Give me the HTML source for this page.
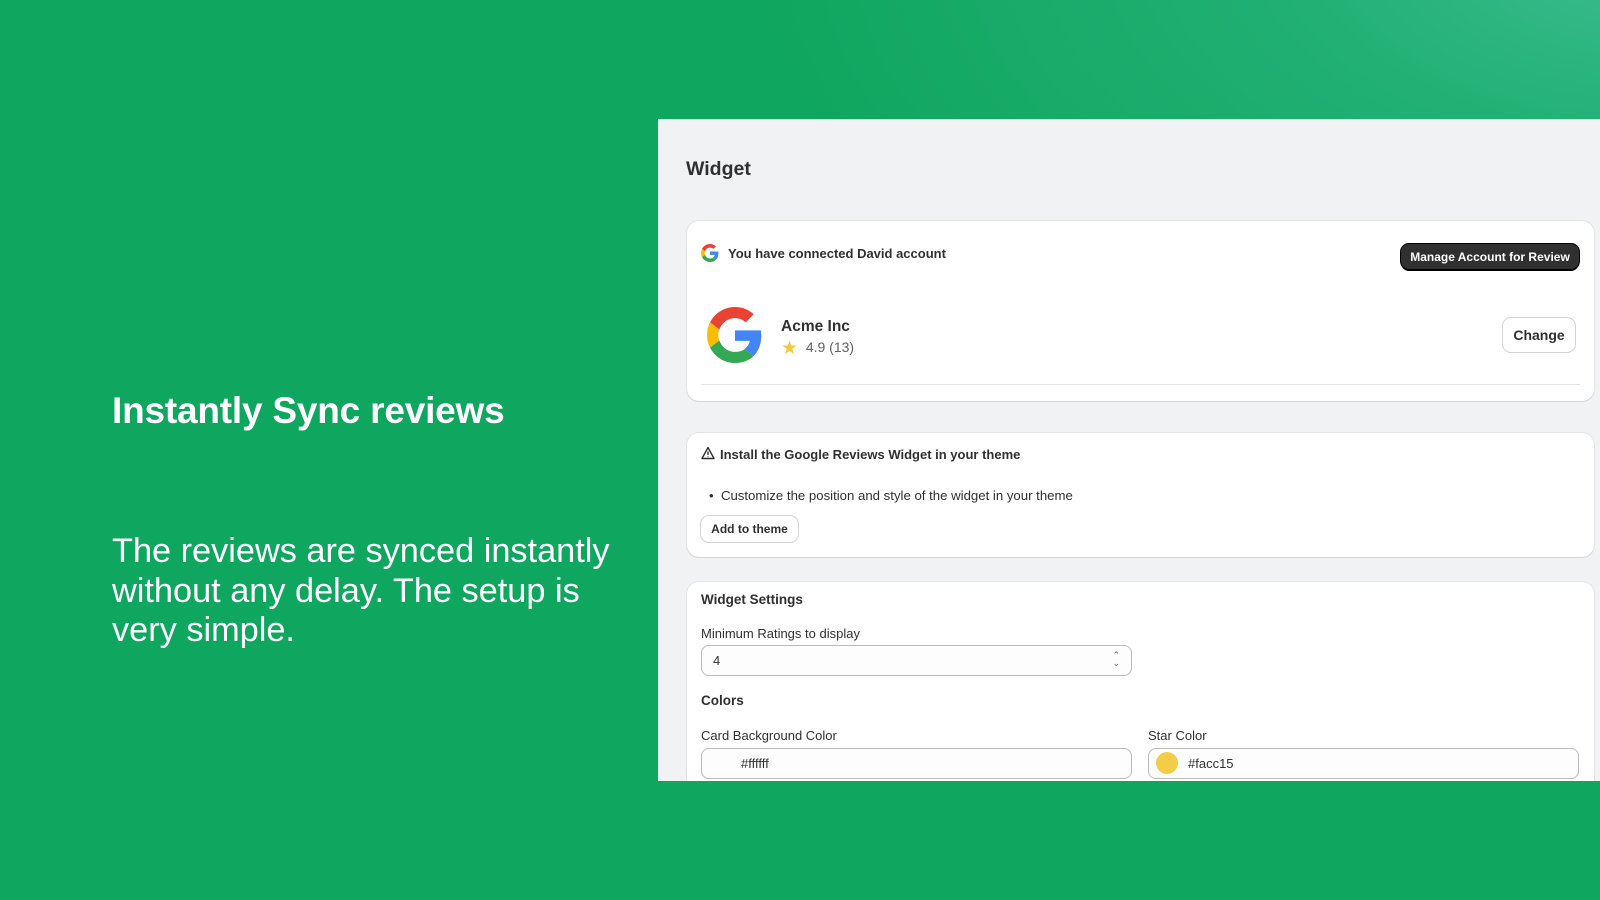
<!DOCTYPE html>
<html><head><meta charset="utf-8"><style>
*{box-sizing:border-box;margin:0;padding:0}
body{width:1600px;height:900px;overflow:hidden;font-family:"Liberation Sans",sans-serif;background:#0fa65f;position:relative}
.bg{position:absolute;inset:0;background:radial-gradient(ellipse 900px 500px at 1650px -60px,#3dbd92 0%,#22b074 40%,rgba(15,166,95,0) 100%)}
.h1{position:absolute;left:112px;top:390px;color:#fff;font-size:37px;font-weight:bold;letter-spacing:-0.2px}
.p{position:absolute;left:112px;top:532px;color:#fff;font-size:34.3px;line-height:39.5px;width:525px}
.panel{position:absolute;left:658px;top:119px;width:942px;height:662px;background:#f1f2f4;overflow:hidden;color:#303030}
.card{position:absolute;left:29px;width:907px;background:#fff;border-radius:12px;box-shadow:0 1px 0 #d4d4d4,0 0 0 1px #e3e3e3}
.b{font-weight:bold}
.abs{position:absolute}
.btn{position:absolute;border-radius:8px;background:#fff;box-shadow:0 0 0 1px #d4d4d4,0 1px 0 #c8c8c8;font-size:13px;font-weight:bold;display:flex;align-items:center;justify-content:center}
.inp{position:absolute;height:31px;border-radius:8px;background:#fdfdfd;box-shadow:inset 0 0 0 1px #bbb;font-size:13px;display:flex;align-items:center}
</style></head><body>
<div class="bg"></div>
<div class="h1">Instantly Sync reviews</div>
<div class="p">The reviews are synced instantly without any delay. The setup is very simple.</div>
<div class="panel">
 <div class="abs b" style="left:28px;top:39px;font-size:19.5px">Widget</div>
 <div class="card" style="top:102px;height:180px">
  <svg class="abs" style="left:14px;top:23px" width="18" height="18" viewBox="0 0 48 48"><path fill="#EA4335" d="M24 9.5c3.5 0 6.7 1.2 9.2 3.6l6.9-6.9C35.9 2.4 30.5 0 24 0 14.6 0 6.6 5.4 2.6 13.2l8 6.2C12.5 13.7 17.8 9.5 24 9.5z"/><path fill="#4285F4" d="M46.5 24.5c0-1.6-.1-3.1-.4-4.5H24v9h12.7c-.6 2.9-2.2 5.4-4.7 7.1l7.7 6c4.5-4.2 6.8-10.3 6.8-17.6z"/><path fill="#FBBC05" d="M10.5 28.6c-.5-1.4-.8-3-.8-4.6s.3-3.2.8-4.6l-8-6.2C.9 16.5 0 20.1 0 24s.9 7.5 2.6 10.8l7.9-6.2z"/><path fill="#34A853" d="M24 48c6.5 0 11.9-2.1 15.9-5.8l-7.7-6c-2.2 1.5-5 2.3-8.2 2.3-6.2 0-11.5-4.2-13.4-9.9l-8 6.2C6.6 42.6 14.6 48 24 48z"/></svg>
  <div class="abs b" style="left:41px;top:25px;font-size:13px">You have connected David account</div>
  <div class="btn" style="left:714px;top:23px;width:178px;height:25px;background:#303030;color:#fff;font-size:12px;box-shadow:0 0 0 1px #000,0 2px 0 #000">Manage Account for Review</div>
  <svg class="abs" style="left:20px;top:86px" width="56" height="56" viewBox="0 0 48 48"><path fill="#EA4335" d="M24 9.5c3.5 0 6.7 1.2 9.2 3.6l6.9-6.9C35.9 2.4 30.5 0 24 0 14.6 0 6.6 5.4 2.6 13.2l8 6.2C12.5 13.7 17.8 9.5 24 9.5z"/><path fill="#4285F4" d="M46.5 24.5c0-1.6-.1-3.1-.4-4.5H24v9h12.7c-.6 2.9-2.2 5.4-4.7 7.1l7.7 6c4.5-4.2 6.8-10.3 6.8-17.6z"/><path fill="#FBBC05" d="M10.5 28.6c-.5-1.4-.8-3-.8-4.6s.3-3.2.8-4.6l-8-6.2C.9 16.5 0 20.1 0 24s.9 7.5 2.6 10.8l7.9-6.2z"/><path fill="#34A853" d="M24 48c6.5 0 11.9-2.1 15.9-5.8l-7.7-6c-2.2 1.5-5 2.3-8.2 2.3-6.2 0-11.5-4.2-13.4-9.9l-8 6.2C6.6 42.6 14.6 48 24 48z"/></svg>
  <div class="abs b" style="left:94px;top:97px;font-size:15.5px">Acme Inc</div>
  <div class="abs" style="left:94px;top:116px;font-size:14px;color:#616161"><span style="color:#f5c842;font-size:19px;vertical-align:-2px">★</span>&nbsp; 4.9 (13)</div>
  <div class="btn" style="left:816px;top:97px;width:72px;height:34px;font-size:14px">Change</div>
  <div class="abs" style="left:14px;top:163px;width:879px;height:1px;background:#e3e3e3"></div>
 </div>
 <div class="card" style="top:314px;height:124px">
  <svg class="abs" style="left:14px;top:13px" width="14" height="14" viewBox="0 0 14 14"><path d="M7 1.5L1 12.5h12z" fill="none" stroke="#303030" stroke-width="1.4" stroke-linejoin="round"/><path d="M7 5.5v3.5M7 10.5v.6" stroke="#303030" stroke-width="1.4"/></svg>
  <div class="abs b" style="left:33px;top:14px;font-size:13px">Install the Google Reviews Widget in your theme</div>
  <div class="abs" style="left:22px;top:55px;font-size:13.2px">•&nbsp; Customize the position and style of the widget in your theme</div>
  <div class="btn" style="left:14px;top:83px;width:97px;height:26px;font-size:12px">Add to theme</div>
 </div>
 <div class="card" style="top:463px;height:240px">
  <div class="abs b" style="left:14px;top:10px;font-size:13.5px">Widget Settings</div>
  <div class="abs" style="left:14px;top:44px;font-size:13px">Minimum Ratings to display</div>
  <div class="inp" style="left:14px;top:63px;width:431px;padding-left:12px">4<span style="position:absolute;right:12px;top:6px;font-size:9px;line-height:8px;color:#666">⌃<br>⌄</span></div>
  <div class="abs b" style="left:14px;top:111px;font-size:13.5px">Colors</div>
  <div class="abs" style="left:14px;top:146px;font-size:13px">Card Background Color</div>
  <div class="abs" style="left:461px;top:146px;font-size:13px">Star Color</div>
  <div class="inp" style="left:14px;top:166px;width:431px;padding-left:40px">#ffffff</div>
  <div class="inp" style="left:461px;top:166px;width:431px;padding-left:40px"><span style="position:absolute;left:8px;top:4px;width:22px;height:22px;border-radius:50%;background:#f4cd47"></span>#facc15</div>
 </div>
</div>
</body></html>
